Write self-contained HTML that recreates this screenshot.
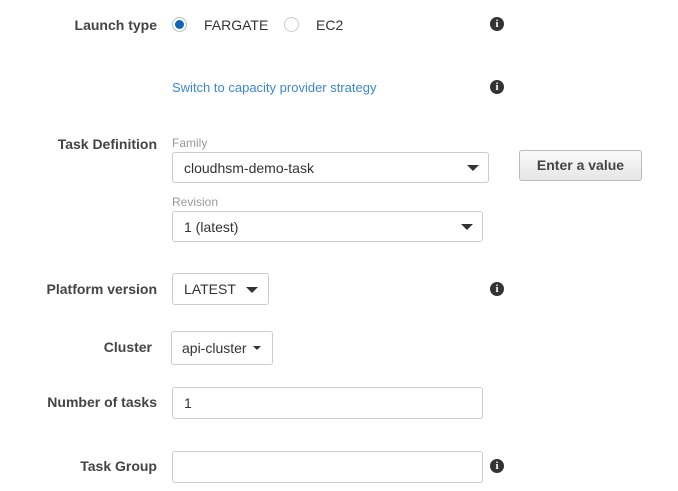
<!DOCTYPE html>
<html><head><style>
body{margin:0;width:678px;height:491px;background:#fff;font-family:"Liberation Sans",Arial,sans-serif;position:relative;overflow:hidden;color:#333}
.a{position:absolute}
.lbl{position:absolute;right:521px;font-weight:bold;font-size:14px;color:#444;white-space:nowrap}
.box{position:absolute;border:1px solid #ccc;border-radius:3px;box-sizing:border-box;font-size:14px;color:#333;padding-left:11px;display:flex;align-items:center;background:#fff}
.car{position:absolute;width:0;height:0;border-left:5px solid transparent;border-right:5px solid transparent;border-top:5px solid #333}
.info{position:absolute;width:14px;height:14px;border-radius:50%;background:#333;color:#fff;font:bold 11px "Liberation Serif",serif;text-align:center;line-height:14px}
.sm{font-size:12px;color:#999;position:absolute;left:172px}
</style></head><body>
<div class="lbl" style="top:17px">Launch type</div>
<div class="a" style="left:172px;top:17px;width:15px;height:15px;border:1px solid #bbb;border-radius:50%;box-sizing:border-box"><div class="a" style="left:2px;top:2px;width:9px;height:9px;border-radius:50%;background:#1166bb"></div></div>
<div class="a" style="left:204px;top:17px;font-size:14px">FARGATE</div>
<div class="a" style="left:284px;top:17px;width:15px;height:15px;border:1px solid #ccc;border-radius:50%;box-sizing:border-box"></div>
<div class="a" style="left:316px;top:17px;font-size:14px">EC2</div>
<div class="info" style="left:490px;top:17px">i</div>
<div class="a" style="left:172px;top:80px;font-size:13px;color:#3b88d6">Switch to capacity provider strategy</div>
<div class="info" style="left:490px;top:80px">i</div>
<div class="lbl" style="top:136px">Task Definition</div>
<div class="sm" style="top:136px">Family</div>
<div class="box" style="left:172px;top:152px;width:317px;height:31px">cloudhsm-demo-task</div>
<div class="car" style="left:467px;top:165px;border-left-width:6px;border-right-width:6px;border-top-width:6px"></div>
<div class="a" style="left:519px;top:150px;width:123px;height:31px;box-sizing:border-box;border:1px solid #bbb;border-radius:3px;background:linear-gradient(#fafafa,#e6e6e6);font-weight:bold;font-size:14px;color:#444;text-align:center;line-height:29px">Enter a value</div>
<div class="sm" style="top:195px">Revision</div>
<div class="box" style="left:172px;top:211px;width:311px;height:31px">1 (latest)</div>
<div class="car" style="left:461px;top:224px;border-left-width:6px;border-right-width:6px;border-top-width:6px"></div>
<div class="lbl" style="top:281px">Platform version</div>
<div class="box" style="left:172px;top:273px;width:97px;height:32px">LATEST</div>
<div class="car" style="left:246px;top:287px;border-left-width:6px;border-right-width:6px;border-top-width:6px"></div>
<div class="info" style="left:490px;top:282px">i</div>
<div class="lbl" style="top:339px;right:526px">Cluster</div>
<div class="box" style="left:171px;top:331px;width:102px;height:34px;padding-left:10px">api-cluster</div>
<div class="car" style="left:253px;top:346px;border-left-width:4px;border-right-width:4px;border-top-width:4px"></div>
<div class="lbl" style="top:394px">Number of tasks</div>
<div class="box" style="left:172px;top:387px;width:311px;height:32px">1</div>
<div class="lbl" style="top:458px">Task Group</div>
<div class="box" style="left:172px;top:451px;width:311px;height:32px"></div>
<div class="info" style="left:490px;top:459px">i</div>
</body></html>
